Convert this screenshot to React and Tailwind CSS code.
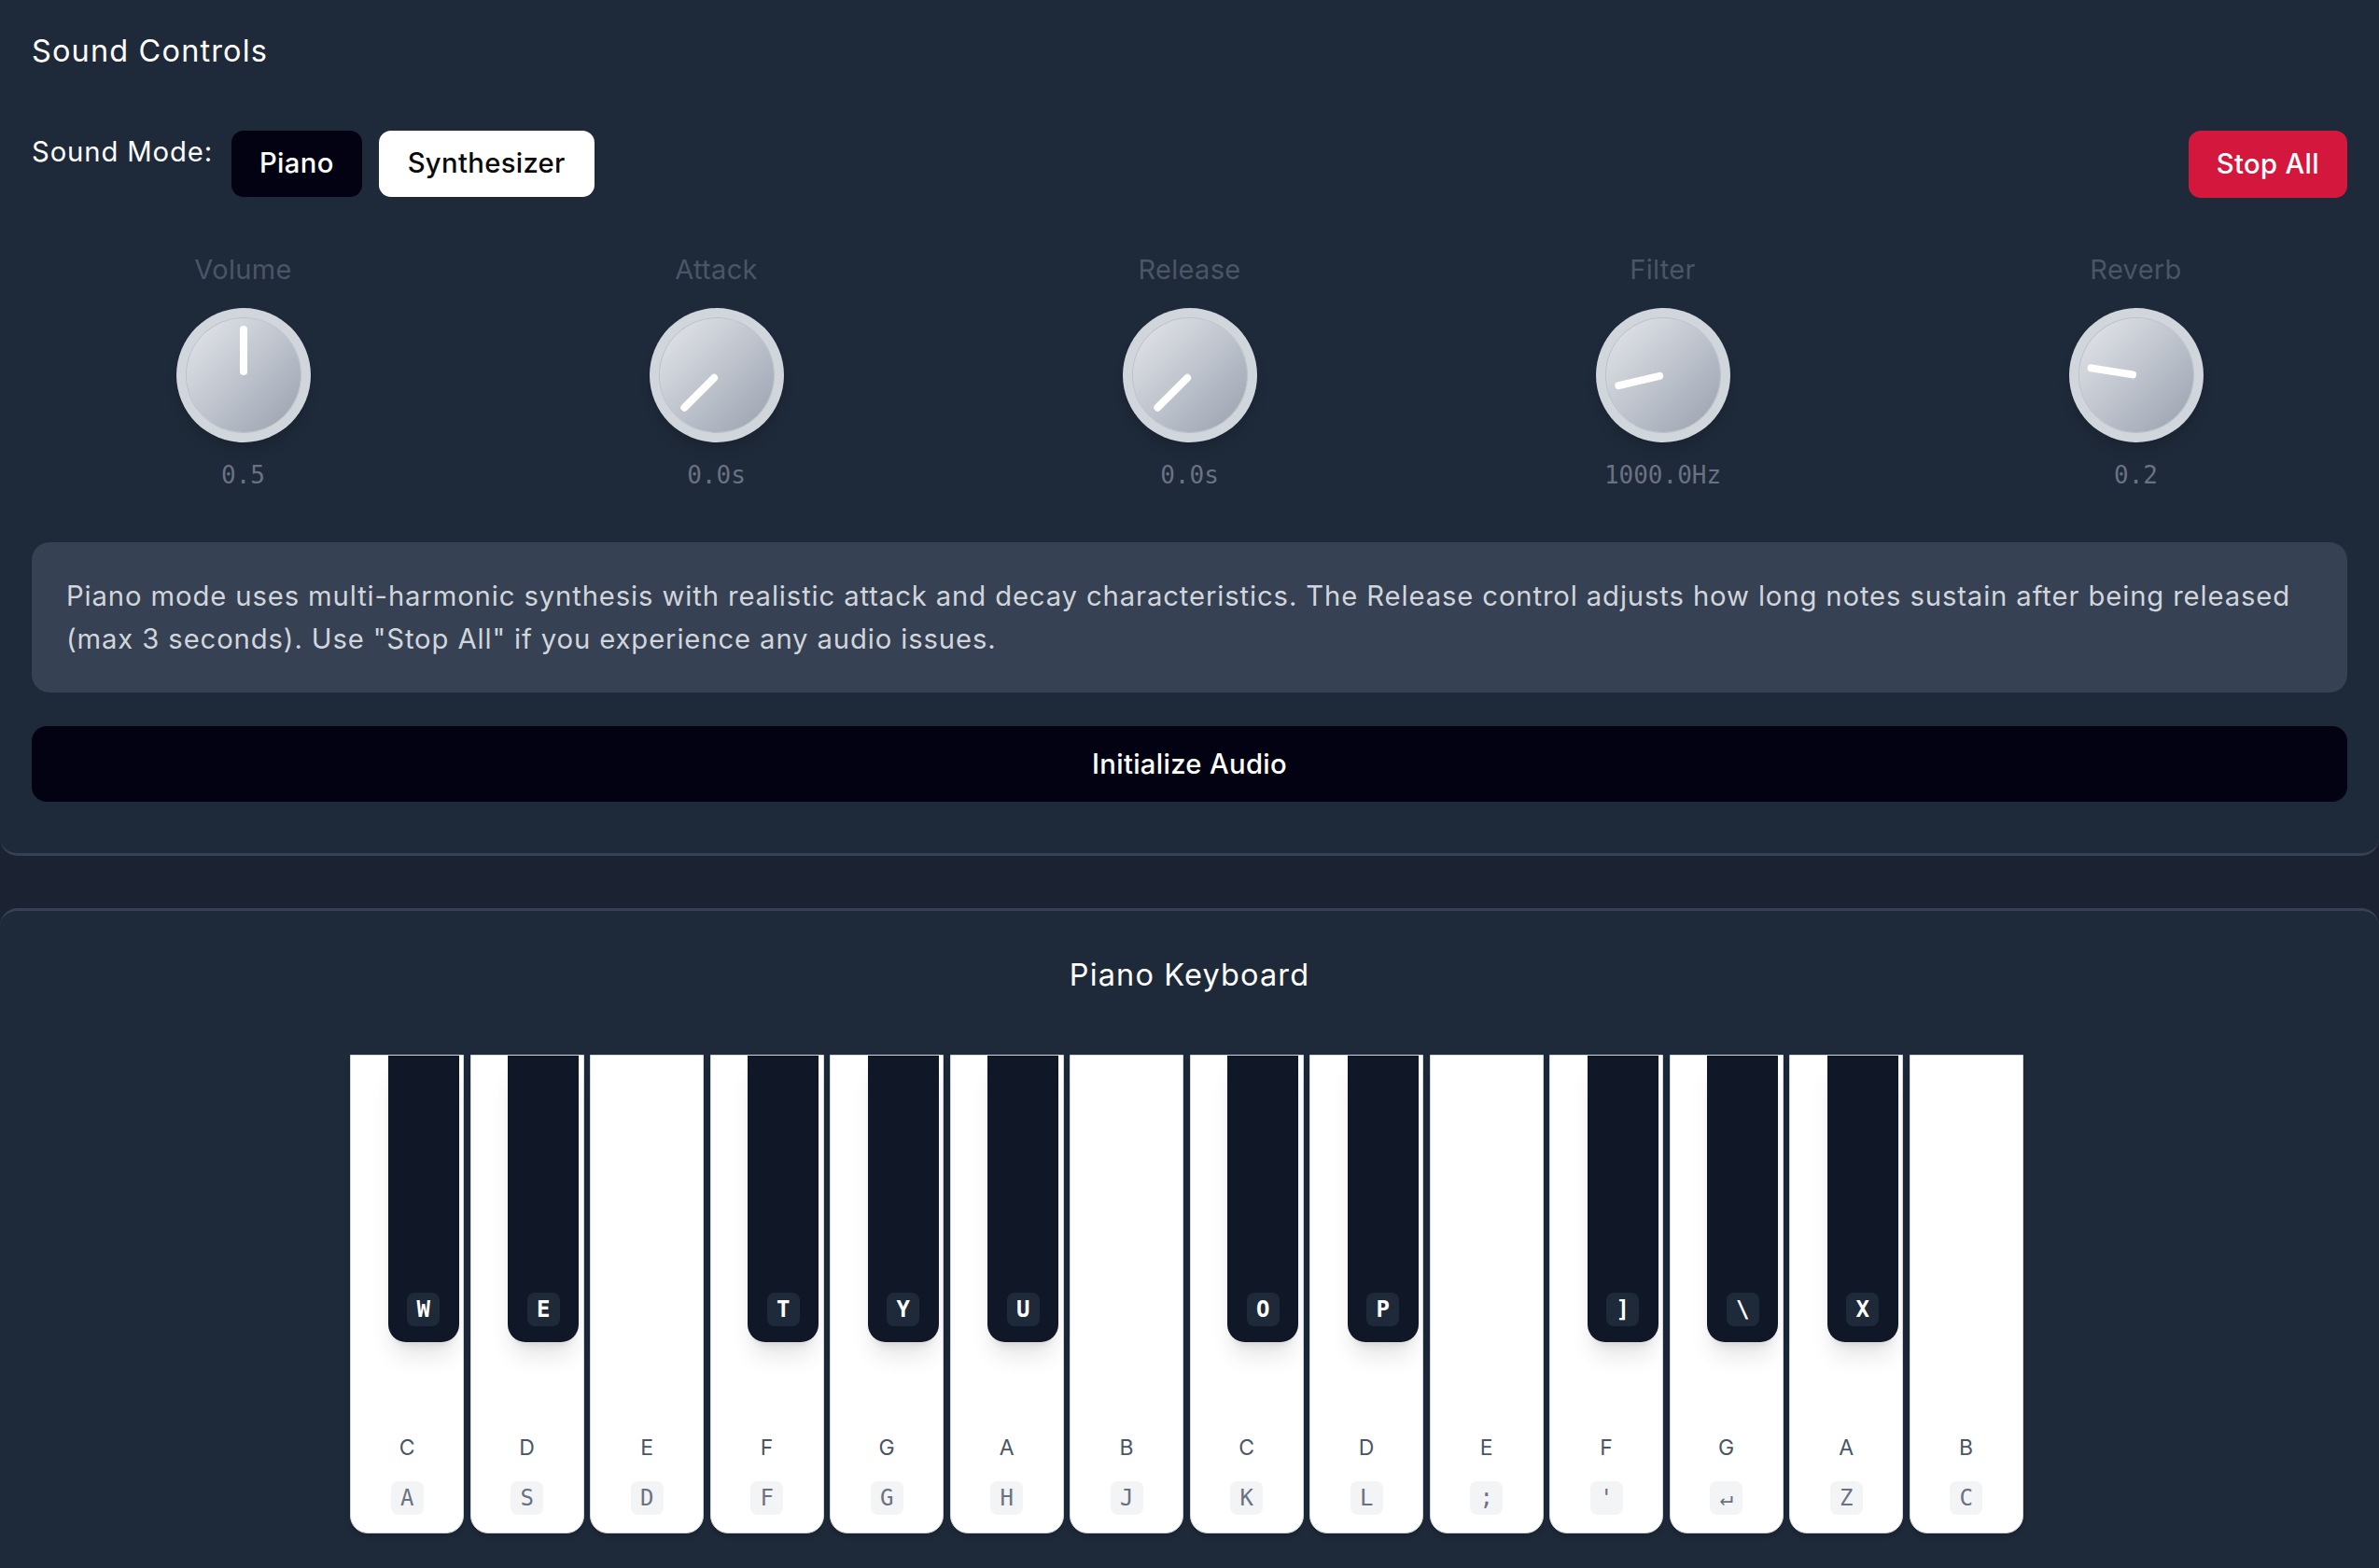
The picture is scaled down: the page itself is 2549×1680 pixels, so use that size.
import React from "react";

const knobs = [
  { label: "Volume", value: 0.5, text: "0.5" },
  { label: "Attack", value: 0, text: "0.0s" },
  { label: "Release", value: 0, text: "0.0s" },
  { label: "Filter", value: 0.118, text: "1000.0Hz" },
  { label: "Reverb", value: 0.2, text: "0.2" },
];

const whiteKeys = [
  { note: "C", key: "A", black: "W" },
  { note: "D", key: "S", black: "E" },
  { note: "E", key: "D" },
  { note: "F", key: "F", black: "T" },
  { note: "G", key: "G", black: "Y" },
  { note: "A", key: "H", black: "U" },
  { note: "B", key: "J" },
  { note: "C", key: "K", black: "O" },
  { note: "D", key: "L", black: "P" },
  { note: "E", key: ";" },
  { note: "F", key: "'", black: "]" },
  { note: "G", key: "↵", black: "\\" },
  { note: "A", key: "Z", black: "X" },
  { note: "B", key: "C" },
];

function Knob({ label, value, text }) {
  const angle = -135 + value * 270;
  return (
    <div className="flex flex-col items-center">
      <span className="text-[29px] leading-[45.5px] text-gray-600">{label}</span>
      <div className="mt-[19px] w-[144px] h-[144px] rounded-full bg-gray-300 p-[11px] shadow-lg">
        <div className="relative w-full h-full rounded-full bg-linear-to-br from-gray-200 to-gray-400 ring-1 ring-gray-400/40">
          <div
            className="absolute left-1/2 bottom-1/2 -ml-[4px] w-[8px] h-[53px] rounded-full bg-white origin-bottom"
            style={{ transform: `rotate(${angle}deg)` }}
          />
        </div>
      </div>
      <span className="mt-[16px] font-['DejaVu_Sans_Mono',monospace] tracking-normal text-[26px] leading-[39px] text-gray-500">
        {text}
      </span>
    </div>
  );
}

function WhiteKey({ note, keyName, black }) {
  return (
    <div className="relative mx-[3.25px] w-[122px] h-[513px] shrink-0 bg-white border-[1.5px] border-gray-300 rounded-b-[19px] shadow-md flex flex-col justify-end items-center pb-[19px]">
      {black && (
        <div className="absolute top-0 left-[39.5px] z-10 w-[76px] h-[307px] bg-gray-900 rounded-b-[19px] shadow-xl flex items-end justify-center pb-[17px]">
          <span className="min-w-[35px] h-[36px] px-[7px] rounded-[8px] bg-gray-800 text-white font-['DejaVu_Sans_Mono',monospace] tracking-normal font-bold text-[24px] flex items-center justify-center">
            {black}
          </span>
        </div>
      )}
      <span className="text-[23px] leading-[32.5px] text-gray-600">{note}</span>
      <span className="mt-[19px] min-w-[35px] h-[36px] px-[7px] rounded-[8px] bg-gray-100 text-gray-500 font-['DejaVu_Sans_Mono',monospace] tracking-normal text-[24px] flex items-center justify-center">
        {keyName}
      </span>
    </div>
  );
}

export default function App() {
  return (
    <div className="h-[1680px] overflow-hidden bg-[#1b2332] font-['Inter','Noto_Sans',sans-serif] tracking-[0.02em] flex flex-col">
      <section className="bg-gray-800 border-b-[3px] border-gray-700 rounded-b-[19px] px-[34px] pt-[32px] pb-[55px]">
        <h2 className="text-[32.5px] leading-[45.5px] text-white tracking-[0.035em]">Sound Controls</h2>

        <div className="mt-[62px] flex items-start justify-between">
          <div className="flex items-start">
            <span className="text-[29.25px] leading-[45.5px] text-white tracking-[0.03em]">Sound Mode:</span>
            <div className="ml-[20px] flex gap-[18px]">
              <button className="h-[71px] px-[30px] rounded-[13px] bg-[#030213] text-white text-[29.25px] font-medium">
                Piano
              </button>
              <button className="h-[71px] px-[31px] rounded-[13px] bg-white text-[#0a0a0a] text-[29.25px] font-medium">
                Synthesizer
              </button>
            </div>
          </div>
          <button className="h-[72px] px-[30px] rounded-[13px] bg-[#d4183d] text-white text-[29.25px] font-medium">
            Stop All
          </button>
        </div>

        <div className="mt-[54px] grid grid-cols-5 gap-[54px]">
          {knobs.map((k) => (
            <Knob key={k.label} {...k} />
          ))}
        </div>

        <div className="mt-[52px] rounded-[19px] bg-gray-700 px-[37px] py-[35px] text-[29.25px] leading-[45.5px] text-gray-300 tracking-[0.03em]">
          <span className="whitespace-nowrap">
            Piano mode uses multi-harmonic synthesis with realistic attack and decay characteristics. The Release control
            adjusts how long notes sustain after being released
          </span>
          <br />
          (max 3 seconds). Use "Stop All" if you experience any audio issues.
        </div>

        <button className="mt-[36px] w-full h-[81px] rounded-[16px] bg-[#030213] text-white text-[29.25px] font-medium">
          Initialize Audio
        </button>
      </section>

      <section className="mt-[56px] flex-1 bg-gray-800 border-t-[3px] border-gray-700 rounded-t-[19px] pt-[46px]">
        <h2 className="text-center text-[32.5px] leading-[45.5px] text-white tracking-[0.035em]">Piano Keyboard</h2>
        <div className="mt-[62px] flex justify-center pr-[6px]">
          {whiteKeys.map((k, i) => (
            <WhiteKey key={i} note={k.note} keyName={k.key} black={k.black} />
          ))}
        </div>
      </section>
    </div>
  );
}
